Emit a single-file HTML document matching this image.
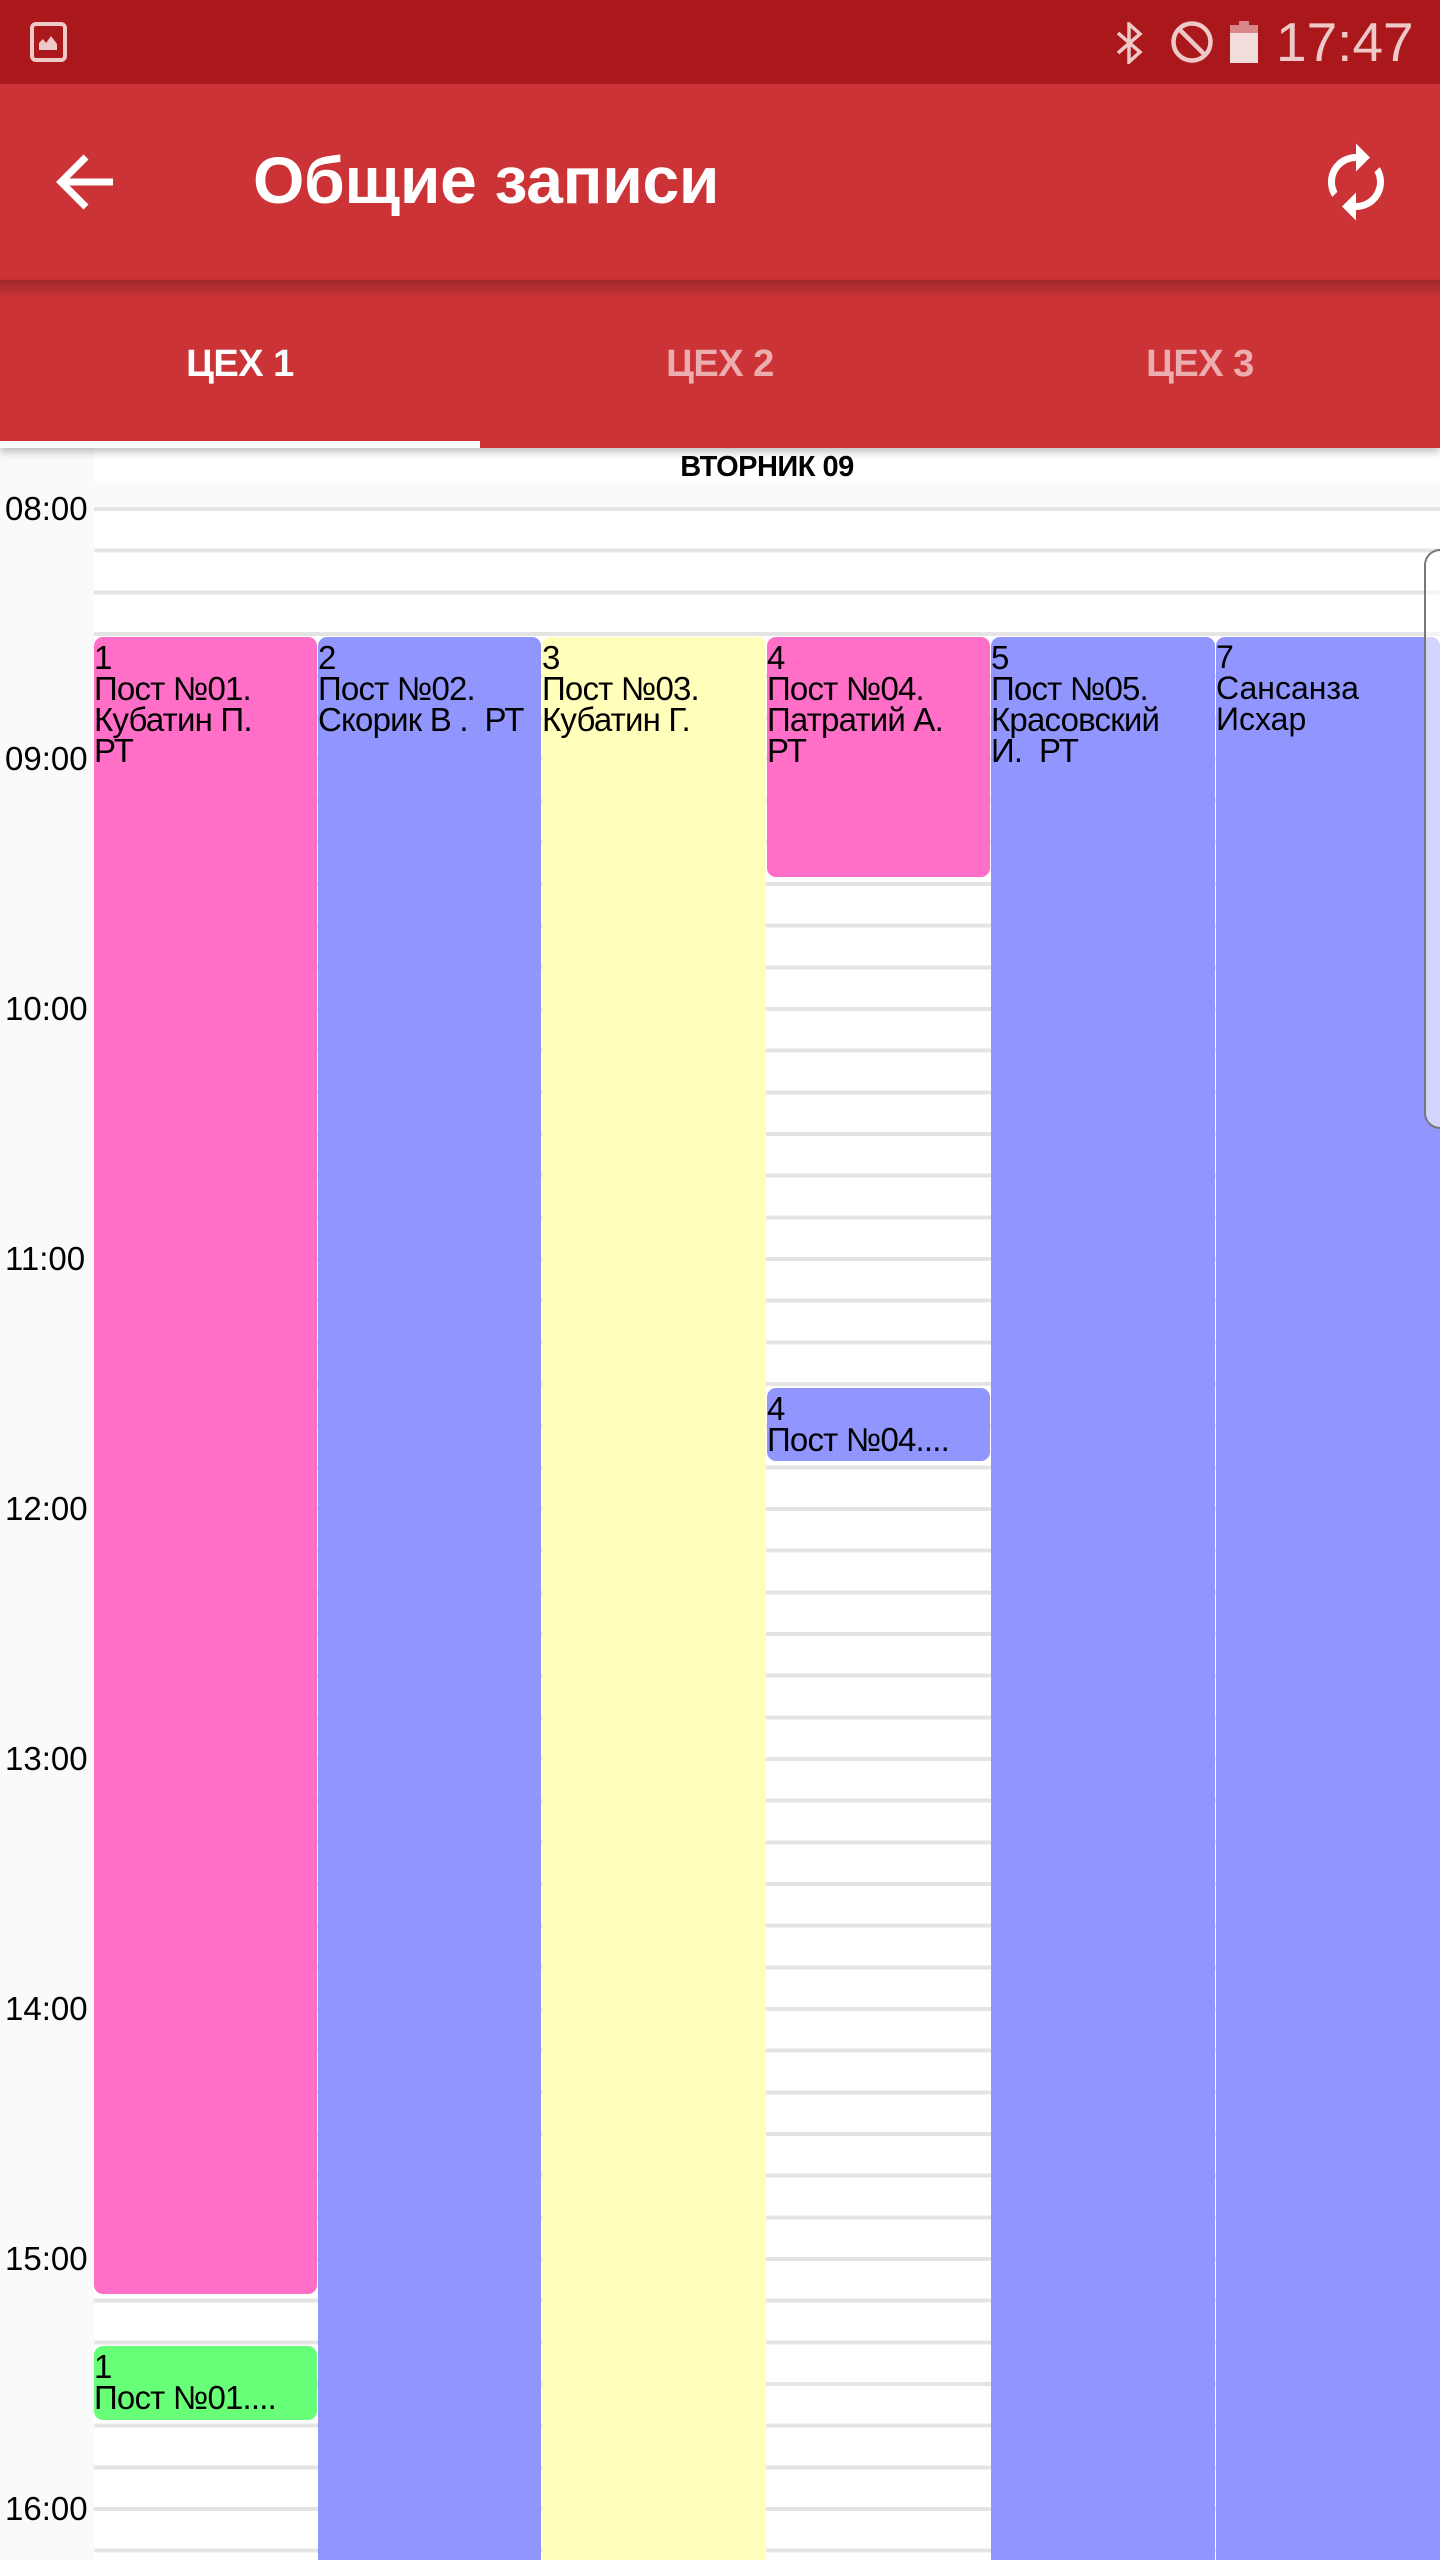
<!DOCTYPE html>
<html><head><meta charset="utf-8">
<style>
*{margin:0;padding:0;box-sizing:border-box}
html{width:1440px;height:2560px;overflow:hidden}
body{width:1440px;height:2560px;overflow:hidden;background:#fafafa;font-family:"Liberation Sans",Arial,sans-serif;position:relative}
.abs{position:absolute}
#status{left:0;top:0;width:1440px;height:84px;background:#aa181b}
#toolbar{left:0;top:84px;width:1440px;height:196px;background:#cc3336}
#tabs{left:0;top:280px;width:1440px;height:168px;background:#cc3336;box-shadow:0 4px 8px rgba(0,0,0,.25);z-index:3}
#tabs:before{content:"";position:absolute;left:0;top:0;width:1440px;height:18px;background:linear-gradient(rgba(0,0,0,.22),rgba(0,0,0,0))}
.tab{position:absolute;top:0;width:480px;height:168px;line-height:168px;text-align:center;font-size:38px;font-weight:bold;color:rgba(255,255,255,.6);letter-spacing:-0.5px}
.tab.on{color:#fff}
#ind{left:0;top:441px;width:480px;height:7px;background:#fff;z-index:4}
#day{left:94px;top:448px;width:1346px;height:35px;background:#fff;text-align:center;font-weight:bold;font-size:29px;line-height:38px;color:#000;letter-spacing:-0.5px;z-index:2}
#grid{left:94px;top:507px;width:1346px;height:2053px;background-color:#fff;
 background-image:repeating-linear-gradient(to bottom,#e4e4e4 0px,#e4e4e4 4px,transparent 4px,transparent 41.667px)}
.tl{position:absolute;left:5px;font-size:33px;color:#000;line-height:36px;height:36px}
.ev{position:absolute;border-radius:9px;font-size:33px;line-height:31px;color:#000;padding-top:5px;overflow:hidden;white-space:nowrap;letter-spacing:-0.8px}
.full{border-radius:9px 9px 0 0;height:1923px}
.pk{background:#ff6ec7}.bl{background:#9196ff}.yl{background:#ffffbb}.gr{background:#66ff77}
</style></head><body>
<div id="status" class="abs">
 <svg class="abs" style="left:30px;top:22px" width="37" height="40" viewBox="0 0 37 40">
  <rect x="2" y="2" width="33" height="36" rx="4" fill="none" stroke="#efc8c8" stroke-width="4"/>
  <rect x="8" y="8" width="21" height="20" fill="#aa181b"/>
  <path d="M9 28 L9 21 L13 17 L16 21 L21 14 L27 22 L27 28Z" fill="#efc8c8"/>
 </svg>
 <svg class="abs" style="left:1114px;top:22px" width="34" height="42" viewBox="0 0 34 42">
  <path d="M4 11 L26 30 L15 40 L15 2 L26 12 L4 31" fill="none" stroke="#efc8c8" stroke-width="3.5"/>
 </svg>
 <svg class="abs" style="left:1169px;top:20px" width="46" height="44" viewBox="0 0 46 44">
  <circle cx="23" cy="22" r="18.5" fill="none" stroke="#efc8c8" stroke-width="4.5"/>
  <path d="M10 9 L36 35" stroke="#efc8c8" stroke-width="4.5"/>
 </svg>
 <svg class="abs" style="left:1230px;top:21px" width="28" height="42" viewBox="0 0 28 42">
  <rect x="9" y="0" width="10" height="4" fill="#d88888"/>
  <rect x="0" y="4" width="28" height="8" fill="#d88888"/>
  <rect x="0" y="12" width="28" height="30" fill="#f2dcdc"/>
 </svg>
 <div class="abs" style="left:1276px;top:9px;font-size:55px;line-height:66px;color:#efc8c8">17:47</div>
</div>
<div id="toolbar" class="abs">
 <svg class="abs" style="left:50px;top:64px" width="70" height="70" viewBox="0 0 70 70">
  <path d="M63 34 L12 34 M36 9 L11 34 L36 59" fill="none" stroke="#fff" stroke-width="7"/>
 </svg>
 <div class="abs" style="left:253px;top:56px;font-size:66px;font-weight:bold;color:#fff;line-height:80px;letter-spacing:-0.3px">Общие записи</div>
 <svg class="abs" style="left:1314px;top:56px;transform:scaleX(-1)" width="84" height="84" viewBox="0 0 24 24">
  <path fill="#fff" d="M12 4V1L8 5l4 4V6c3.31 0 6 2.690 6 6 0 1.01-.25 1.97-.7 2.8l1.46 1.46C19.54 15.03 20 13.57 20 12c0-4.42-3.58-8-8-8zm0 14c-3.31 0-6-2.69-6-6 0-1.01.25-1.97.7-2.8L5.24 7.74C4.46 8.97 4 10.43 4 12c0 4.42 3.58 8 8 8v3l4-4-4-4v3z"/>
 </svg>
</div>
<div id="tabs" class="abs">
 <div class="tab on" style="left:0">ЦЕХ 1</div>
 <div class="tab" style="left:480px">ЦЕХ 2</div>
 <div class="tab" style="left:960px">ЦЕХ 3</div>
</div>
<div id="ind" class="abs"></div>
<div id="day" class="abs">ВТОРНИК 09</div>
<div id="grid" class="abs"></div>

<div class="tl" style="top:491px">08:00</div>
<div class="tl" style="top:741px">09:00</div>
<div class="tl" style="top:991px">10:00</div>
<div class="tl" style="top:1241px">11:00</div>
<div class="tl" style="top:1491px">12:00</div>
<div class="tl" style="top:1741px">13:00</div>
<div class="tl" style="top:1991px">14:00</div>
<div class="tl" style="top:2241px">15:00</div>
<div class="tl" style="top:2491px">16:00</div>

<div class="ev pk" style="left:94px;top:637px;width:223px;height:1657px">1<br>Пост №01.<br>Кубатин П.<br>РТ</div>
<div class="ev gr" style="left:94px;top:2346px;width:223px;height:74px">1<br>Пост №01....</div>
<div class="ev bl full" style="left:318px;top:637px;width:223px">2<br>Пост №02.<br>Скорик В .&nbsp; РТ</div>
<div class="ev yl full" style="left:542px;top:637px;width:224px">3<br>Пост №03.<br>Кубатин Г.</div>
<div class="ev pk" style="left:767px;top:637px;width:223px;height:240px">4<br>Пост №04.<br>Патратий А.<br>РТ</div>
<div class="ev bl" style="left:767px;top:1388px;width:223px;height:73px">4<br>Пост №04....</div>
<div class="ev bl full" style="left:991px;top:637px;width:224px">5<br>Пост №05.<br>Красовский<br>И.&nbsp; РТ</div>
<div class="ev bl full" style="left:1216px;top:637px;width:224px;letter-spacing:0;font-size:32px">7<br>Сансанза<br>Исхар</div>
<div class="abs" style="left:1424px;top:549px;width:16px;height:580px;border:2px solid #777;border-right:none;border-radius:26px 0 0 26px;background:rgba(255,255,255,.6)"></div>
</body></html>
